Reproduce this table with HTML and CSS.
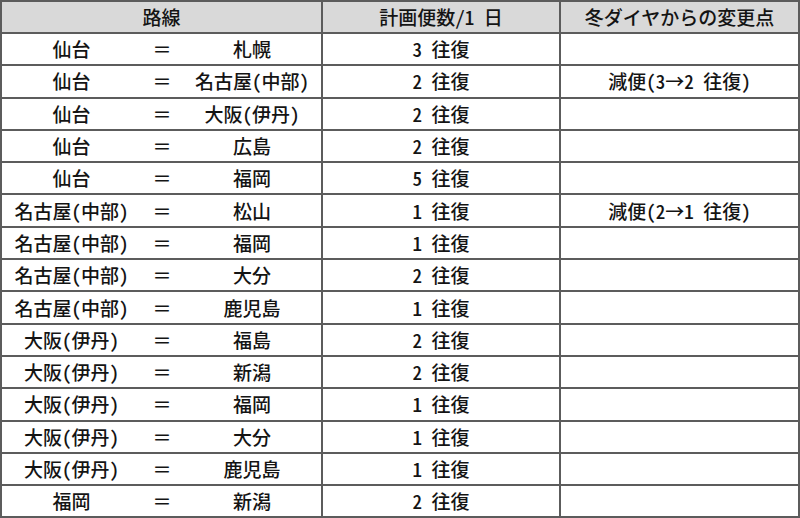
FILE: index.html
```html
<!DOCTYPE html>
<html lang="ja">
<head>
<meta charset="utf-8">
<link rel="stylesheet" href="styles.css">
</head>
<body>
<table class="routes">
  <colgroup>
    <col class="c-from"><col class="c-eq"><col class="c-to"><col class="c-count"><col class="c-change">
  </colgroup>
  <thead>
    <tr><th colspan="3" class="sep">路線</th><th class="sep">計画便数/1 日</th><th class="sep">冬ダイヤからの変更点</th></tr>
  </thead>
  <tbody>
    <tr><td>仙台</td><td class="eq">＝</td><td class="sep">札幌</td><td class="sep">3 往復</td><td class="sep"></td></tr>
    <tr><td>仙台</td><td class="eq">＝</td><td class="sep">名古屋(中部)</td><td class="sep">2 往復</td><td class="sep">減便(3→2 往復)</td></tr>
    <tr><td>仙台</td><td class="eq">＝</td><td class="sep">大阪(伊丹)</td><td class="sep">2 往復</td><td class="sep"></td></tr>
    <tr><td>仙台</td><td class="eq">＝</td><td class="sep">広島</td><td class="sep">2 往復</td><td class="sep"></td></tr>
    <tr><td>仙台</td><td class="eq">＝</td><td class="sep">福岡</td><td class="sep">5 往復</td><td class="sep"></td></tr>
    <tr><td>名古屋(中部)</td><td class="eq">＝</td><td class="sep">松山</td><td class="sep">1 往復</td><td class="sep">減便(2→1 往復)</td></tr>
    <tr><td>名古屋(中部)</td><td class="eq">＝</td><td class="sep">福岡</td><td class="sep">1 往復</td><td class="sep"></td></tr>
    <tr><td>名古屋(中部)</td><td class="eq">＝</td><td class="sep">大分</td><td class="sep">2 往復</td><td class="sep"></td></tr>
    <tr><td>名古屋(中部)</td><td class="eq">＝</td><td class="sep">鹿児島</td><td class="sep">1 往復</td><td class="sep"></td></tr>
    <tr><td>大阪(伊丹)</td><td class="eq">＝</td><td class="sep">福島</td><td class="sep">2 往復</td><td class="sep"></td></tr>
    <tr><td>大阪(伊丹)</td><td class="eq">＝</td><td class="sep">新潟</td><td class="sep">2 往復</td><td class="sep"></td></tr>
    <tr><td>大阪(伊丹)</td><td class="eq">＝</td><td class="sep">福岡</td><td class="sep">1 往復</td><td class="sep"></td></tr>
    <tr><td>大阪(伊丹)</td><td class="eq">＝</td><td class="sep">大分</td><td class="sep">1 往復</td><td class="sep"></td></tr>
    <tr><td>大阪(伊丹)</td><td class="eq">＝</td><td class="sep">鹿児島</td><td class="sep">1 往復</td><td class="sep"></td></tr>
    <tr><td>福岡</td><td class="eq">＝</td><td class="sep">新潟</td><td class="sep">2 往復</td><td class="sep"></td></tr>
  </tbody>
</table>
</body>
</html>
```
FILE: styles.css
```css
html, body {
  margin: 0;
  padding: 0;
  background: #ffffff;
}
.routes {
  width: 800px;
  table-layout: fixed;
  border-collapse: separate;
  border-spacing: 0;
  border-left: 2px solid #5c5c5c;
  border-top: 2px solid #5c5c5c;
  font-family: "Noto Sans CJK JP", sans-serif;
  font-feature-settings: "hwid";
  font-size: 19px;
  font-weight: 500;
  color: #141414;
}
.c-from { width: 139px; }
.c-eq { width: 42px; }
.c-to { width: 140px; }
.c-count { width: 238px; }
.c-change { width: 239px; }
.routes th,
.routes td {
  padding: 0;
  height: 30.3px;
  line-height: 30px;
  text-align: center;
  vertical-align: middle;
  white-space: nowrap;
  border-bottom: 2px solid #5c5c5c;
  font-weight: 500;
  overflow: hidden;
}
.routes th {
  height: 30px;
  background: #d9d9d9;
}
.routes .eq {
  font-feature-settings: normal;
}
.routes .sep {
  border-right: 2px solid #5c5c5c;
}
```
